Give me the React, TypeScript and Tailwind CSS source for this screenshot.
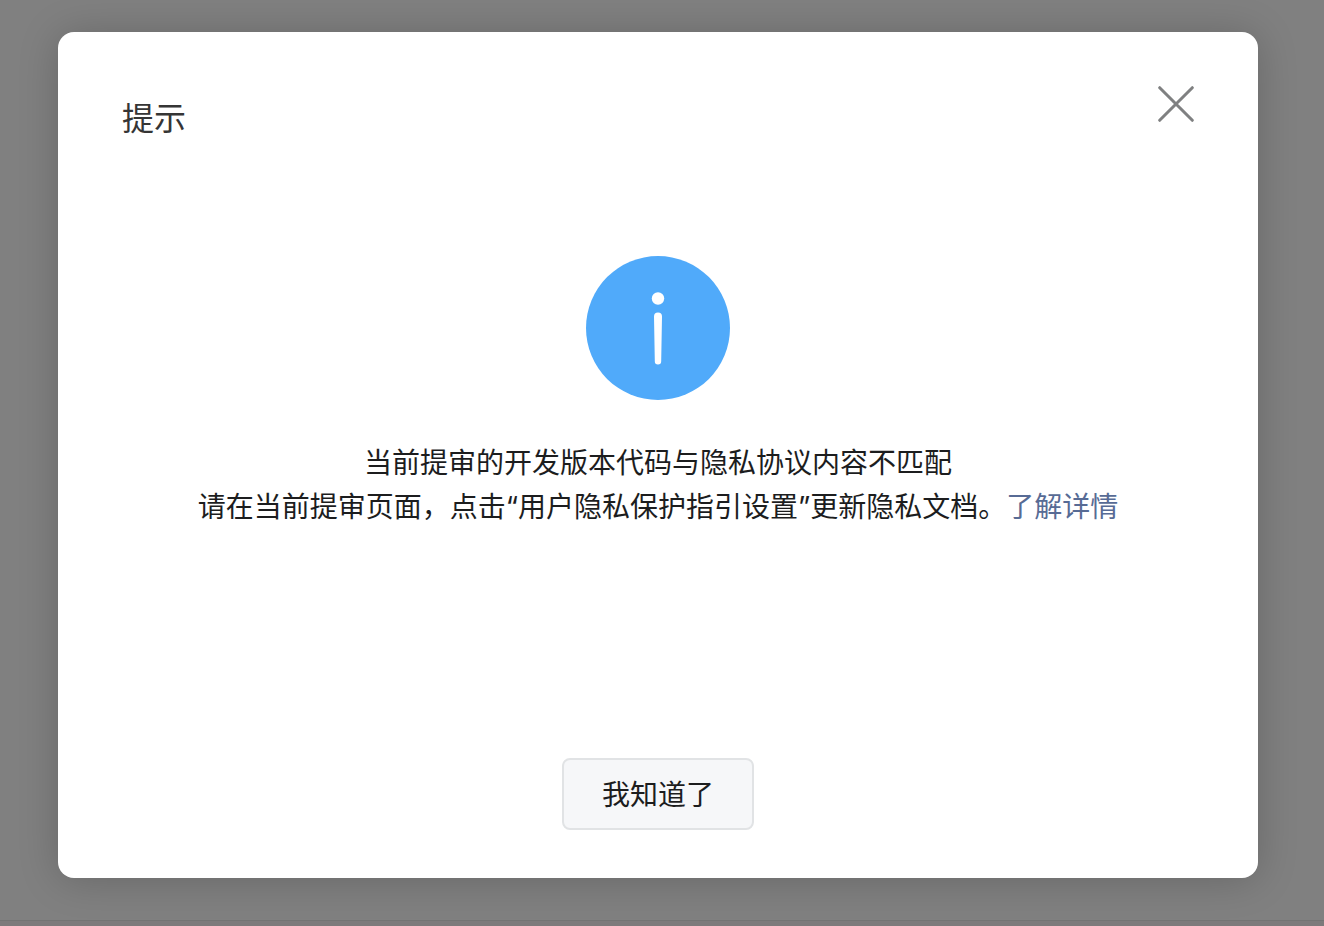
import React from 'react';

const CloseIcon = () => (
    <svg className="size-9" viewBox="0 0 36 36" fill="none" stroke="#7f8081" strokeWidth="3" strokeLinecap="round">
        <path d="M1.7 1.7 34.3 34.3M34.3 1.7 1.7 34.3" />
    </svg>
);

const InfoIcon = () => (
    <svg className="size-36" viewBox="0 0 144 144" aria-hidden="true">
        <circle cx="72" cy="72" r="72" fill="#50aafa" />
        <circle cx="72" cy="42.5" r="6.2" fill="#fff" />
        <path
            d="M68 60.5a4 4 0 0 1 8 0L75.2 105.2a3.2 3.2 0 0 1-6.4 0Z"
            fill="#fff"
        />
    </svg>
);

function App() {
    return (
        <div className="flex min-h-screen flex-col bg-[#808080] font-['Inter','Noto_Sans_CJK_SC',sans-serif] text-[28px] leading-[44px] text-[#1c1d1e]">
            <main className="flex flex-1 pt-8 pr-[66px] pb-[42px] pl-[58px]">
                <section
                    role="dialog"
                    aria-labelledby="dialog-title"
                    className="flex flex-1 flex-col rounded-2xl bg-white shadow-[0_2px_40px_rgba(0,0,0,0.2)]"
                >
                    <header className="flex items-start justify-between px-16 pt-[54px]">
                        <h1 id="dialog-title" className="pt-[9px] text-[32px] leading-[48px] text-[#353535]">
                            提示
                        </h1>
                        <button type="button" aria-label="关闭" className="cursor-pointer">
                            <CloseIcon />
                        </button>
                    </header>
                    <div className="flex flex-1 flex-col items-center px-16 pt-[113px] text-center">
                        <InfoIcon />
                        <p className="mt-[41px]">
                            当前提审的开发版本代码与隐私协议内容不匹配
                            <br />
                            请在当前提审页面，点击“用户隐私保护指引设置”更新隐私文档。
                            <a href="#" className="text-[#576b95]">
                                了解详情
                            </a>
                        </p>
                    </div>
                    <footer className="flex justify-center pb-12">
                        <button
                            type="button"
                            className="h-[72px] w-48 cursor-pointer rounded-lg border-2 border-[#e1e3e5] bg-[#f6f7f9] pt-0.5"
                        >
                            我知道了
                        </button>
                    </footer>
                </section>
            </main>
            <div className="h-[6px] border-t border-[#737373] bg-[#7d7a7b]" />
        </div>
    );
}

export default App;
